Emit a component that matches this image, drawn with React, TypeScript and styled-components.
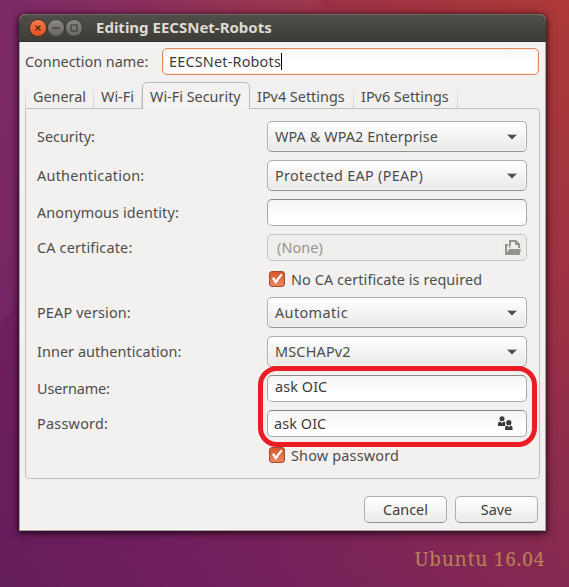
import React from "react";
import styled, { createGlobalStyle, css } from "styled-components";

const Global = createGlobalStyle`
  *, *::before, *::after { box-sizing: border-box; }
  body { margin: 0; font-family: "Noto Sans", "Open Sans", sans-serif; font-size: 14.4px; color: #4c4c4c; }
`;

const Desktop = styled.main`
  width: 569px;
  height: 587px;
  overflow: hidden;
  display: flex;
  flex-direction: column;
  padding: 14px 23px 0 19px;
  background:
    linear-gradient(135deg, rgba(255, 255, 255, 0.03) 0 228px, transparent 229px),
    radial-gradient(circle at 0 0, rgba(115, 32, 110, 0.42), transparent 260px),
    radial-gradient(circle at 100% 100%, rgba(122, 38, 82, 0.4), transparent 260px),
    linear-gradient(56deg, #641d5c 0%, #711f5f 20%, #7d2459 42%, #942e4b 67%, #ad3936 100%);
`;

const Window = styled.section`
  flex: none;
  height: 517px;
  border-radius: 7px 7px 0 0;
  background: #f2f1f0;
  box-shadow: 0 1px 5px 1px rgba(20, 0, 15, 0.65), 0 3px 11px rgba(20, 0, 15, 0.35);
`;

const TitleBar = styled.header`
  height: 28px;
  display: flex;
  align-items: center;
  gap: 2px;
  padding-left: 11px;
  border-top: 1px solid #6b6963;
  border-bottom: 1px solid #34332f;
  border-radius: 7px 7px 0 0;
  background: linear-gradient(#504e48, #3d3c37);
`;

const WindowButton = styled.span<{ $close?: boolean }>`
  width: 16px;
  height: 16px;
  border-radius: 50%;
  display: grid;
  place-items: center;
  background: ${(p) => (p.$close ? "linear-gradient(#f4794f, #e1501e)" : "linear-gradient(#8a8880, #66645e)")};
  box-shadow: 0 0 0 1px ${(p) => (p.$close ? "#4b3029" : "#3b3a35")};
`;

const Title = styled.h1`
  margin: 0 0 0 12px;
  font-size: 15px;
  line-height: 26px;
  color: #dfdbd2;
  position: relative;
  top: -1px;
`;

const Body = styled.div`
  height: 489px;
  padding: 6px 5px 7px 5px;
  border: 1px solid #aaa49f;
  border-top: 0;
  display: flex;
  flex-direction: column;
`;

const NameRow = styled.div`
  display: flex;
  height: 27px;
  line-height: 27px;
  gap: 13px;
  padding-right: 1px;
`;

const Label = styled.label<{ $track?: number }>`
  white-space: nowrap;
  letter-spacing: ${(p) => p.$track ?? 0}px;
`;

const fieldBase = css`
  display: flex;
  align-items: center;
  border-radius: 5px;
  white-space: nowrap;
`;

const NameLabel = styled(Label)`
  width: 124px;
  flex: none;
`;

const NameEntry = styled.div`
  ${fieldBase}
  flex: 1;
  padding-left: 6px;
  letter-spacing: 0.2px;
  border: 1px solid #e2865f;
  color: #3c3c3c;
  background: linear-gradient(#f6f6f6, #fff 60%);
  box-shadow: inset 0 0 0 1px #fbe9e2;
`;

const Caret = styled.i`
  width: 1px;
  height: 17px;
  background: #000;
`;

const Tabs = styled.nav`
  display: flex;
  align-items: flex-end;
  height: 33px;
`;

const Tab = styled.div<{ $w: number; $active?: boolean; $first?: boolean }>`
  flex: none;
  width: ${(p) => p.$w}px;
  height: 25px;
  padding-left: 7px;
  line-height: 27px;
  white-space: nowrap;
  ${(p) =>
    p.$active
      ? css`
          position: relative;
          height: 27px;
          margin-bottom: -1px;
          border: 1px solid #bfbbb7;
          border-bottom: 0;
          border-radius: 5px 5px 0 0;
          background: #f3f2f1;
        `
      : css`
          border: 0 solid;
          border-right-width: 1px;
          border-left-width: ${p.$first ? 1 : 0}px;
          border-image: linear-gradient(#f2f1f0, #d2cfcc) 1;
        `}
`;

const Panel = styled.div`
  height: 371px;
  padding: 12px 12px 0 11px;
  border: 1px solid #c3bfbb;
  border-radius: 0 4px 4px 4px;
  display: grid;
  grid-template-columns: 1fr 260px;
  grid-template-rows: 31px 31px 27px 27px 20px 31px 31px 27px 27px 20px;
  row-gap: 8px;
  align-items: center;
`;

const Combo = styled.div<{ $track?: number }>`
  ${fieldBase}
  height: 31px;
  justify-content: space-between;
  padding: 0 9px 0 7px;
  letter-spacing: ${(p) => p.$track ?? 0}px;
  border: 1px solid #b0aeac;
  border-bottom-color: #92908e;
  background: linear-gradient(#fff, #e9e8e7);
  box-shadow: inset 0 0 0 1px rgba(255, 255, 255, 0.5);
`;

const Entry = styled.div<{ $disabled?: boolean; $lift?: boolean }>`
  ${fieldBase}
  height: 27px;
  justify-content: space-between;
  padding: 0 13px ${(p) => (p.$lift ? 4 : 0)}px ${(p) => (p.$lift ? 7 : 6)}px;
  letter-spacing: 0.1px;
  color: #3c3c3c;
  border: 1px solid #a9a7a5;
  border-top-color: #8b8987;
  background: linear-gradient(#f4f4f4, #fff 70%);
  ${(p) =>
    p.$disabled &&
    css`
      padding: 0 5px 0 9px;
      color: #96918b;
      border-color: #c7c5c3;
      background: #eeeeed;
    `}
`;

const Browse = styled.span`
  display: flex;
  align-items: center;
  height: 17px;
  padding-left: 5px;
  border-left: 1px solid #f7f7f6;
`;

const CheckRow = styled.div<{ $track?: number }>`
  grid-column: 2;
  display: flex;
  align-items: center;
  gap: 6px;
  padding-left: 2px;
  white-space: nowrap;
  letter-spacing: ${(p) => p.$track ?? 0}px;
`;

const CheckBox = styled.span`
  width: 16px;
  height: 16px;
  display: grid;
  place-items: center;
  border: 1px solid #a5492b;
  border-radius: 3px;
  background: linear-gradient(#d65a2c, #e58960);
`;

const Actions = styled.footer`
  margin-top: auto;
  padding-right: 2px;
  display: flex;
  justify-content: flex-end;
  gap: 8px;
`;

const Button = styled.button`
  width: 83px;
  height: 27px;
  padding: 0 0 1px;
  font: inherit;
  color: #3c3c3c;
  border: 1px solid #b0aeac;
  border-bottom-color: #92908e;
  border-radius: 5px;
  background: linear-gradient(#fff, #ebeae9);
`;

const Highlight = styled.div`
  position: absolute;
  left: 258px;
  top: 366px;
  width: 279px;
  height: 81px;
  border: 5px solid #ed1c24;
  border-radius: 19px;
`;

const Release = styled.div`
  align-self: flex-end;
  margin-top: 13px;
  padding-right: 1px;
  font-family: "Noto Serif", "DejaVu Serif", serif;
  font-size: 19px;
  line-height: 30px;
  letter-spacing: 0.8px;
  white-space: nowrap;
  color: #b98155;
`;

const Arrow = () => (
  <svg width="10" height="6" viewBox="0 0 10 6">
    <path d="M0 .5 Q5 .9 10 .5 L5 5.5Z" fill="#4c4c4c" />
  </svg>
);

const Check = () => (
  <CheckBox>
    <svg width="12" height="12" viewBox="0 0 12 12">
      <path d="M1 5.2 3 4.2 4.7 7 10 .8 11.6 1.8 5.2 10.4 4.2 10.4Z" fill="#fff" />
    </svg>
  </CheckBox>
);

const FolderIcon = () => (
  <svg width="16" height="16" viewBox="0 0 16 16" fill="#96918b">
    <path d="M0 4H3V6H2V12L4.500 9H16L14.500 15H0Z" />
    <path d="M4 8V0H11L15 4V8H13V5H10V2H6V5L4.500 8Z" />
  </svg>
);

const UsersIcon = () => (
  <svg width="15" height="15" viewBox="0 0 15 15" fill="#3c3c3c">
    <circle cx="4" cy="2.700" r="2.500" />
    <path d="M0 10V7.500Q0 5.600 2 5.400L4 7 6 5.400 7.200 6V10Z" />
    <circle cx="10.800" cy="6.700" r="2.600" />
    <path d="M7 14V11.500Q7 9.600 9 9.400L10.800 11 12.600 9.400Q14.500 9.600 14.500 11.500V14Z" />
  </svg>
);

export default function App() {
  return (
    <Desktop>
      <Global />
      <Window>
        <TitleBar>
          <WindowButton $close>
            <svg width="6" height="6" viewBox="0 0 6 6">
              <path d="M.5.5 5.5 5.5M5.5.5.5 5.5" stroke="#4a2518" strokeWidth="1.1" />
            </svg>
          </WindowButton>
          <WindowButton>
            <svg width="8" height="2" viewBox="0 0 8 2">
              <path d="M0 1H8" stroke="#3a3934" strokeWidth="1.2" />
            </svg>
          </WindowButton>
          <WindowButton>
            <svg width="8" height="8" viewBox="0 0 8 8">
              <path d="M1 1H7V7H1Z" fill="none" stroke="#3a3934" strokeWidth="1.1" />
            </svg>
          </WindowButton>
          <Title>Editing EECSNet-Robots</Title>
        </TitleBar>
        <Body>
          <NameRow>
            <NameLabel>Connection name:</NameLabel>
            <NameEntry>
              EECSNet-Robots
              <Caret />
            </NameEntry>
          </NameRow>
          <Tabs>
            <Tab $w={69} $first>General</Tab>
            <Tab $w={48}>Wi-Fi</Tab>
            <Tab $w={108} $active>Wi-Fi Security</Tab>
            <Tab $w={104}>IPv4 Settings</Tab>
            <Tab $w={104}>IPv6 Settings</Tab>
          </Tabs>
          <Panel>
            <Label>Security:</Label>
            <Combo $track={0.1}>WPA &amp; WPA2 Enterprise<Arrow /></Combo>
            <Label $track={0.27}>Authentication:</Label>
            <Combo $track={0.3}>Protected EAP (PEAP)<Arrow /></Combo>
            <Label $track={0.12}>Anonymous identity:</Label>
            <Entry />
            <Label $track={0.18}>CA certificate:</Label>
            <Entry $disabled>(None)<Browse><FolderIcon /></Browse></Entry>
            <CheckRow $track={0.1}><Check />No CA certificate is required</CheckRow>
            <Label $track={0.16}>PEAP version:</Label>
            <Combo $track={0.4}>Automatic<Arrow /></Combo>
            <Label $track={0.08}>Inner authentication:</Label>
            <Combo $track={0.2}>MSCHAPv2<Arrow /></Combo>
            <Label $track={-0.12}>Username:</Label>
            <Entry $lift>ask OIC</Entry>
            <Label $track={0.25}>Password:</Label>
            <Entry>ask OIC<UsersIcon /></Entry>
            <CheckRow $track={0.2}><Check />Show password</CheckRow>
          </Panel>
          <Actions>
            <Button>Cancel</Button>
            <Button>Save</Button>
          </Actions>
        </Body>
      </Window>
      <Release>Ubuntu 16.04</Release>
      <Highlight />
    </Desktop>
  );
}
